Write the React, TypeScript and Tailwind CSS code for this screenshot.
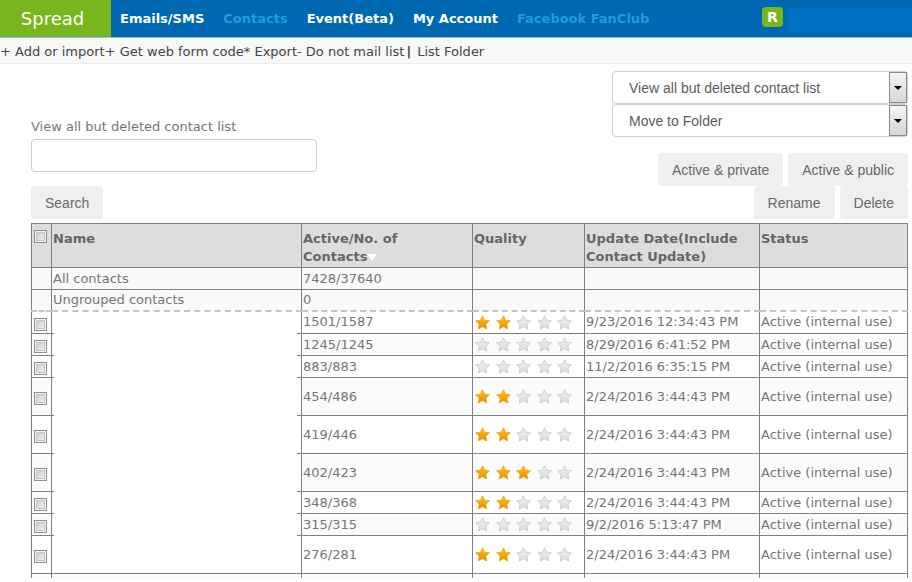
import { useState } from 'react'
import clsx from 'clsx'

type Contact = {
  count: string
  stars: number
  updated: string
  tall?: boolean
}

const CONTACTS: Contact[] = [
  { count: '1501/1587', stars: 2, updated: '9/23/2016 12:34:43 PM' },
  { count: '1245/1245', stars: 0, updated: '8/29/2016 6:41:52 PM' },
  { count: '883/883', stars: 0, updated: '11/2/2016 6:35:15 PM' },
  { count: '454/486', stars: 2, updated: '2/24/2016 3:44:43 PM', tall: true },
  { count: '419/446', stars: 2, updated: '2/24/2016 3:44:43 PM', tall: true },
  { count: '402/423', stars: 3, updated: '2/24/2016 3:44:43 PM', tall: true },
  { count: '348/368', stars: 2, updated: '2/24/2016 3:44:43 PM' },
  { count: '315/315', stars: 0, updated: '9/2/2016 5:13:47 PM' },
  { count: '276/281', stars: 2, updated: '2/24/2016 3:44:43 PM', tall: true },
]

const NAV = [
  { label: 'Emails/SMS' },
  { label: 'Contacts', dim: true },
  { label: 'Event(Beta)' },
  { label: 'My Account' },
  { label: 'Facebook FanClub', dim: true },
]

const cell = 'border border-[#808080] pl-px pr-0.5 py-0'

export default function App() {
  return (
    <div className="bg-white pb-1 text-[13px] leading-[18px] text-[#757575] [font-family:Verdana,'DejaVu_Sans',sans-serif]">
      <StarGradients />
      <TopBar />
      <SubNav />
      <main className="pl-[31px] pr-1 pt-[7px]">
        <Toolbar />
        <ContactTable />
      </main>
    </div>
  )
}

function TopBar() {
  return (
    <header className="flex h-[38px] items-stretch border-b border-[#8fbfe2] bg-[#0067b1]">
      <a href="#" className="flex w-[111px] shrink-0 items-center justify-center bg-[#79b51c] pr-1.5 text-lg text-white">
        Spread
      </a>
      <nav className="flex items-center gap-[19px] pl-[9px] font-bold">
        {NAV.map(item => (
          <a key={item.label} href="#" className={clsx('whitespace-nowrap', item.dim ? 'text-[#229ddb]' : 'text-white')}>
            {item.label}
          </a>
        ))}
      </nav>
      <div className="ml-auto flex items-start gap-[5px] pt-[7px]">
        <span className="flex h-5 w-[21px] items-center justify-center rounded bg-[#79b51c] text-sm font-bold text-white">R</span>
        <span className="mt-px h-6 w-[124px] bg-[#0071c2]" />
      </div>
    </header>
  )
}

function SubNav() {
  return (
    <nav className="flex h-[26px] items-center whitespace-nowrap border-b border-[#ececec] bg-[#f8f8f8] pt-0.5 text-[#444]">
      <a href="#">+ Add or import</a>
      <a href="#">+ Get web form code</a>
      <a href="#">* Export</a>
      <a href="#">- Do not mail list</a>
      <span className="ml-0.5 font-bold">|</span>
      <a href="#" className="ml-1.5">List Folder</a>
    </nav>
  )
}

function Toolbar() {
  return (
    <div className="flex justify-between">
      <form className="flex w-[286px] flex-col items-start pt-[47px]" onSubmit={e => e.preventDefault()}>
        <label htmlFor="query">View all but deleted contact list</label>
        <input
          id="query"
          type="text"
          className="mt-[3px] h-[33px] w-full rounded border border-[#cfcfcf] px-3 outline-none"
        />
        <GreyButton label="Search" className="mt-[14px]" />
      </form>
      <div className="flex w-[296px] flex-col">
        <FolderSelect label="View all but deleted contact list" />
        <FolderSelect label="Move to Folder" />
        <div className="mt-4 flex justify-end gap-[5px]">
          <GreyButton label="Active & private" />
          <GreyButton label="Active & public" />
        </div>
        <div className="flex justify-end gap-[5px]">
          <GreyButton label="Rename" />
          <GreyButton label="Delete" />
        </div>
      </div>
    </div>
  )
}

function GreyButton({ label, className }: { label: string; className?: string }) {
  return (
    <button
      type="submit"
      className={clsx(
        "h-[33px] whitespace-nowrap rounded bg-[#efefef] px-[14px] text-sm text-[#6a6a6a] [font-family:'Liberation_Sans',sans-serif]",
        className,
      )}
    >
      {label}
    </button>
  )
}

function FolderSelect({ label }: { label: string }) {
  return (
    <div className="relative h-[33px]">
      <select
        aria-label={label}
        className="h-full w-full appearance-none rounded border border-[#cfcfcf] bg-white pl-4 text-sm text-[#5c5c5c] outline-none [font-family:'Liberation_Sans',sans-serif]"
      >
        <option>{label}</option>
      </select>
      {/* drop arrow */}
      <span className="pointer-events-none absolute inset-y-px right-px flex w-[18px] items-center justify-center border border-[#8a8a8a] bg-linear-to-b from-[#f4f4f4] to-[#d6d6d6]">
        <svg width="8" height="4" viewBox="0 0 8 4">
          <path d="M0 0h8L4 4z" fill="#000" />
        </svg>
      </span>
    </div>
  )
}

function ContactTable() {
  const [checked, setChecked] = useState<number[]>([])

  const toggle = (i: number) =>
    setChecked(checked.includes(i) ? checked.filter(n => n !== i) : [...checked, i])

  return (
    <table className="mt-1 w-full table-fixed border-collapse text-left">
      <colgroup>
        <col className="w-5" />
        <col className="w-[250px]" />
        <col className="w-[171px]" />
        <col className="w-[112px]" />
        <col className="w-[175px]" />
        <col />
      </colgroup>
      <thead>
        <tr className="h-11 bg-[#dddddd] align-top text-[#666]">
          <th className={clsx(cell, 'pt-1.5')}>
            <Tick
              label="Select all"
              checked={checked.length === CONTACTS.length}
              onChange={() => setChecked(checked.length === CONTACTS.length ? [] : CONTACTS.map((_, i) => i))}
            />
          </th>
          <th className={clsx(cell, 'pt-1.5')}>Name</th>
          <th className={clsx(cell, 'pt-1.5')}>
            Active/No. of
            <br />
            Contacts
            <svg width="10" height="7" viewBox="0 0 10 7" className="inline-block align-baseline">
              <path d="M0 0h10L5 7z" fill="#fff" />
            </svg>
          </th>
          <th className={clsx(cell, 'pt-1.5')}>Quality</th>
          <th className={clsx(cell, 'pt-1.5')}>Update Date(Include Contact Update)</th>
          <th className={clsx(cell, 'pt-1.5')}>Status</th>
        </tr>
      </thead>
      <tbody>
        <SummaryRow name="All contacts" count="7428/37640" />
        <SummaryRow name="Ungrouped contacts" count="0" last />
        {CONTACTS.map((c, i) => (
          <tr key={i} className={clsx(c.tall ? 'h-[38px]' : i === 0 ? 'h-[23px]' : 'h-[22px]', i % 2 ? 'bg-[#fbfbfb]' : 'bg-white')}>
            <td className={clsx(cell, 'pt-1')}>
              <Tick label={`Select ${c.count}`} checked={checked.includes(i)} onChange={() => toggle(i)} />
            </td>
            <td className={clsx(cell, 'relative')}>
              {/* blank name, hides the row lines except at the edges */}
              <div className={clsx('absolute bottom-0 left-0.5 right-1 bg-white', i === 0 ? 'top-0.5' : '-top-0.5')} />
            </td>
            <td className={cell}>{c.count}</td>
            <td className={cell}><Stars value={c.stars} /></td>
            <td className={cell}>{c.updated}</td>
            <td className={cell}>Active (internal use)</td>
          </tr>
        ))}
        <tr className="h-1 bg-[#fbfbfb]">
          {[0, 1, 2, 3, 4, 5].map(n => (
            <td key={n} className="border-x border-[#808080] p-0" />
          ))}
        </tr>
      </tbody>
    </table>
  )
}

function SummaryRow({ name, count, last }: { name: string; count: string; last?: boolean }) {
  const c = clsx(cell, last && 'border-b-2 border-b-[#c4c4c4] [border-bottom-style:dashed]')
  return (
    <tr className={clsx('bg-[#f9f9f9]', last ? 'h-[21px]' : 'h-[22px]')}>
      <td className={c} />
      <td className={c}>{name}</td>
      <td className={c}>{count}</td>
      <td className={c} />
      <td className={c} />
      <td className={c} />
    </tr>
  )
}

function Tick({ label, checked, onChange }: { label: string; checked: boolean; onChange: () => void }) {
  return (
    <input
      type="checkbox"
      aria-label={label}
      checked={checked}
      onChange={onChange}
      className="ml-px block size-[13px] appearance-none border border-[#909090] bg-linear-to-br from-[#c3c8ce] to-[#f6f6f6] shadow-[inset_0_0_0_1px_#f2f2f2,inset_0_0_0_2px_#c4c4c4] checked:from-[#557] checked:to-[#779]"
    />
  )
}

function Stars({ value }: { value: number }) {
  return (
    <div className="ml-px flex w-[97px] justify-between" role="img" aria-label={`${value} of 5`}>
      {[0, 1, 2, 3, 4].map(n => (
        <svg key={n} width="15" height="15" viewBox="0 0 15 15" className="shrink-0">
          <path
            d="M7.5.8l2.1 4.4 4.8.6-3.5 3.4.9 4.8-4.3-2.3L3.2 14l.9-4.8L.6 5.8l4.8-.6z"
            fill={n < value ? 'url(#star-on)' : 'url(#star-off)'}
            stroke={n < value ? '#eda52a' : '#c6c6c4'}
            strokeWidth=".8"
            strokeLinejoin="round"
          />
        </svg>
      ))}
    </div>
  )
}

function StarGradients() {
  return (
    <svg width="0" height="0" className="absolute">
      <defs>
        <linearGradient id="star-on" x1="0" y1="0" x2="0" y2="1">
          <stop offset="0" stopColor="#fdc60c" />
          <stop offset="1" stopColor="#ec8a00" />
        </linearGradient>
        <linearGradient id="star-off" x1="0" y1="0" x2="0" y2="1">
          <stop offset="0" stopColor="#f1f1ef" />
          <stop offset="1" stopColor="#dcdcda" />
        </linearGradient>
      </defs>
    </svg>
  )
}
